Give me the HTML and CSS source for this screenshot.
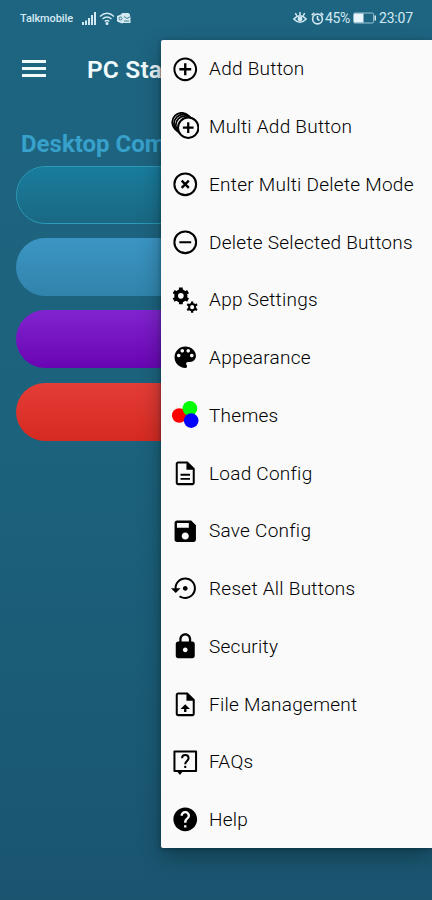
FILE: index.html
```html
<!DOCTYPE html>
<html lang="en">
<head>
<meta charset="utf-8">
<meta name="viewport" content="width=device-width">
<title>PC Status</title>
<link rel="stylesheet" href="styles.css">
</head>
<body>
<div class="screen">
  <header class="status">
    <span class="carrier">Talkmobile</span>
    <svg class="signal" width="14" height="13" viewBox="0 0 14 13" fill="#d3e9f2"><path d="M0 10h2v3H0zM3 8.500h2V13H3zM6 6h2v7H6zM9 3h2v10H9zM12 0h2v13h-2z"/></svg>
    <svg class="wifi" width="16" height="13" viewBox="0 0 16 13" fill="none" stroke="#d3e9f2" stroke-width="1.500"><path d="M1 4.500Q8-2 15 4.500M3.500 7Q8 3 12.500 7M5.700 9.500Q8 7.500 10.300 9.500"/><circle cx="8" cy="11.500" r=".8" fill="#d3e9f2"/></svg>
    <svg class="mail" width="14" height="13" viewBox="0 0 14 13"><path fill="#d3e9f2" d="M5 1h6q2 0 2 3h.5v7H6l-1 .5-5-2V4l4-1.500z"/><circle cx="3.500" cy="6.500" r="1.500" fill="none" stroke="#1e647f" stroke-width=".8"/><path d="M7 4.500l3 2 3.500-2M7 9h5" fill="none" stroke="#1e647f" stroke-width=".8"/></svg>
    <span class="spacer"></span>
    <svg class="eye" width="14" height="12" viewBox="0 0 14 12" fill="none" stroke="#d3e9f2" stroke-width="1.500"><path d="M.8 7Q7 .5 13.200 7Q7 13.500.8 7zM7 0v3M2.300 1.200l1.500 2.500M11.700 1.200l-1.500 2.500"/><circle cx="7" cy="7" r="1.700" fill="#d3e9f2"/></svg>
    <svg class="alarm" width="13" height="13" viewBox="0 0 13 13" fill="none" stroke="#d3e9f2" stroke-width="1.600"><circle cx="6.500" cy="7" r="4.900"/><path d="M6.500 4v3.200l2 1.500M.7 3.200L3.300.9M12.300 3.200L9.700.9"/></svg>
    <span class="level">45%</span>
    <svg class="battery" width="24" height="12" viewBox="0 0 24 12"><rect x=".6" y="1" width="20" height="10" rx="1.500" fill="none" stroke="#9cc4d4" stroke-width="1"/><path d="M1 1.500h9.500v9H1z" fill="#e8f5fa"/><path d="M21.500 3.500h1.500v5h-1.500z" fill="#d3e9f2"/></svg>
    <span class="clock">23:07</span>
  </header>
  <div class="appbar">
    <svg width="24" height="17" viewBox="0 0 24 17" fill="#f1fafd"><path d="M0 0h24v3H0zM0 7h24v3H0zM0 14h24v3H0z"/></svg>
    <h1>PC Status</h1>
  </div>
  <main>
    <h2>Desktop Computer</h2>
    <div class="pill teal"></div>
    <div class="pill blue"></div>
    <div class="pill purple"></div>
    <div class="pill red"></div>
  </main>

  <ul class="menu">
    <li><svg viewBox="0 0 24 24"><path d="M13 7h-2v4H7v2h4v4h2v-4h4v-2h-4V7zm-1-5C6.480 2 2 6.480 2 12s4.480 10 10 10 10-4.480 10-10S17.520 2 12 2zm0 18.300c-4.580 0-8.300-3.720-8.300-8.300s3.720-8.300 8.300-8.300 8.300 3.720 8.300 8.300-3.720 8.300-8.300 8.300z"/></svg><span>Add Button</span></li>
    <li><svg viewBox="0 0 24 24"><g fill="#fafafa" stroke="#000" stroke-width="1.500"><circle cx="9" cy="8.700" r="8"/><circle cx="10.500" cy="10" r="8"/><circle cx="12" cy="11.300" r="8"/><circle cx="14.500" cy="13.200" r="8.600" stroke-width="1.700"/><path d="M14.500 8.700v9M10 13.200h9" stroke-width="1.900"/></g></svg><span>Multi Add Button</span></li>
    <li><svg viewBox="0 0 24 24" class="line"><circle cx="12" cy="12" r="9.150"/><path d="M9 9l6 6M15 9l-6 6" stroke-width="2"/></svg><span>Enter Multi Delete Mode</span></li>
    <li><svg viewBox="0 0 24 24" class="line"><circle cx="12" cy="12" r="9.150"/><path d="M7 12h10" stroke-width="1.700"/></svg><span>Delete Selected Buttons</span></li>
    <li><svg viewBox="0 0 24 24" class="line"><g transform="translate(-.7 -.7)"><circle cx="9" cy="9" r="4" stroke-width="3.200"/><g stroke-width="3.200"><path d="M9 2v2.500M9 13.500V16M2.940 5.500l2.160 1.250M12.900 11.250l2.160 1.250M2.940 12.500l2.160-1.250M12.900 6.750l2.160-1.250"/></g></g><circle cx="17.800" cy="17.800" r="2.550" stroke-width="1.700"/><g stroke-width="1.900"><path d="M17.800 13v2M17.800 20.600v2M13.640 15.400l1.750 1M20.200 19.200l1.750 1M13.640 20.200l1.750-1M20.200 16.400l1.750-1"/></g></svg><span>App Settings</span></li>
    <li><svg viewBox="0 0 24 24"><path d="M12 3c-4.970 0-9 4.030-9 9s4.030 9 9 9c.83 0 1.500-.67 1.500-1.500 0-.39-.15-.74-.39-1.010-.23-.26-.38-.61-.38-.99 0-.83.67-1.500 1.500-1.500H16c2.760 0 5-2.240 5-5 0-4.420-4.030-8-9-8zm-5.500 9c-.83 0-1.500-.67-1.500-1.500S5.670 9 6.500 9 8 9.670 8 10.500 7.330 12 6.500 12zm3-4C8.670 8 8 7.330 8 6.500S8.670 5 9.500 5s1.500.67 1.500 1.500S10.330 8 9.500 8zm5 0c-.83 0-1.500-.67-1.500-1.500S13.670 5 14.500 5s1.500.67 1.500 1.500S15.330 8 14.500 8zm3 4c-.83 0-1.500-.67-1.500-1.500S16.670 9 17.500 9s1.500.67 1.500 1.500-.67 1.500-1.500 1.500z"/></svg><span>Appearance</span></li>
    <li><svg viewBox="0 0 24 24"><circle cx="7" cy="12.200" r="6.200" fill="red"/><circle cx="15.900" cy="6.300" r="6.200" fill="lime"/><circle cx="17" cy="16.500" r="6.200" fill="blue"/></svg><span>Themes</span></li>
    <li><svg viewBox="0 0 24 24"><path d="M8 16h8v1.500H8zm0-3.500h8V14H8zM14 2H6c-1.100 0-2 .9-2 2v16c0 1.100.89 2 1.990 2H18c1.100 0 2-.9 2-2V8l-6-6zm4.300 18.300H5.700V3.700H13V9h5.300v11.300z"/></svg><span>Load Config</span></li>
    <li><svg viewBox="0 0 24 24"><path d="M17 3H5c-1.110 0-2 .9-2 2v14c0 1.100.89 2 2 2h14c1.100 0 2-.9 2-2V7l-4-4zm-5 16c-1.660 0-3-1.340-3-3s1.340-3 3-3 3 1.340 3 3-1.340 3-3 3zm3-10H5V5h10v4z"/></svg><span>Save Config</span></li>
    <li><svg viewBox="0 0 24 24"><path d="M14 12c0-1.100-.9-2-2-2s-2 .9-2 2 .9 2 2 2 2-.9 2-2zm-2-9c-4.970 0-9 4.030-9 9H0l4 4 4-4H4.700c0-4.030 3.270-7.300 7.300-7.300s7.300 3.270 7.300 7.300-3.270 7.300-7.300 7.300c-1.510 0-2.910-.49-4.060-1.300l-1.300 1.400C8.040 20.300 9.940 21 12 21c4.970 0 9-4.030 9-9s-4.030-9-9-9z"/></svg><span>Reset All Buttons</span></li>
    <li><svg viewBox="0 0 24 24"><path d="M18 8h-1V6c0-2.760-2.240-5-5-5S7 3.240 7 6v2H6c-1.100 0-2 .9-2 2v10c0 1.100.9 2 2 2h12c1.100 0 2-.9 2-2V10c0-1.100-.9-2-2-2zm-6 9c-1.100 0-2-.9-2-2s.9-2 2-2 2 .9 2 2-.9 2-2 2zm3.100-9H8.900V6c0-1.710 1.390-3.100 3.100-3.100 1.710 0 3.100 1.390 3.100 3.100v2z"/></svg><span>Security</span></li>
    <li><svg viewBox="0 0 24 24"><path d="M14 2H6c-1.100 0-2 .9-2 2v16c0 1.100.89 2 1.990 2H18c1.100 0 2-.9 2-2V8l-6-6zm4.300 18.300H5.700V3.700H13V9h5.300v11.300zM8 16h3v2.500h2V16h3L12 12z"/></svg><span>File Management</span></li>
    <li><svg viewBox="0 0 24 24" class="line"><path d="M2.900 2.900h18.200v16.400H2.900z" stroke-linejoin="round"/><path d="M5 19.500h5L7.500 22.700z" fill="#000" stroke="none"/><path d="M9.300 8.700c0-3.700 5.500-3.700 5.500 0 0 2.200-2.800 2.200-2.800 4.900M12 15v1.900"/></svg><span>FAQs</span></li>
    <li><svg viewBox="0 0 24 24"><path d="M12 2C6.480 2 2 6.480 2 12s4.480 10 10 10 10-4.480 10-10S17.520 2 12 2zm1 17h-2v-2h2v2zm2.070-7.750l-.9.920C13.450 12.900 13 13.500 13 15h-2v-.5c0-1.100.45-2.100 1.170-2.830l1.240-1.260c.37-.36.590-.86.590-1.410 0-1.100-.9-2-2-2s-2 .9-2 2H8c0-2.210 1.790-4 4-4s4 1.790 4 4c0 .88-.36 1.680-.93 2.250z"/></svg><span>Help</span></li>
  </ul>
</div>
</body>
</html>
```
FILE: styles.css
```css
* { box-sizing: border-box; }
body { margin: 0; font-family: Roboto, "Liberation Sans", sans-serif; }
.screen {
  position: relative;
  height: 900px;
  overflow: hidden;
  background: linear-gradient(#1e6582, #1c627c 50%, #1a5570);
}
.status {
  display: flex;
  align-items: center;
  height: 36px;
  padding: 0 18px 0 20px;
  color: #d3e9f2;
}
.carrier { width: 53px; font-size: 11px; font-weight: 500; letter-spacing: -.1px; white-space: nowrap; }
.signal { margin-left: 9px; }
.wifi { margin-left: 3px; }
.mail { margin-left: 2px; }
.spacer { flex: 1; }
.alarm { margin-left: 4px; }
.level { margin-left: 1px; font-size: 14px; width: 26px; letter-spacing: -.4px; }
.battery { margin-left: 2px; }
.clock { width: 35px; margin-left: 2px; font-size: 14px; letter-spacing: -.2px; }
.level, .clock { font-weight: 400; }
.appbar {
  display: flex;
  align-items: center;
  height: 65px;
  padding-left: 22px;
  gap: 41px;
}
.appbar h1 { margin: 2px 0 0; font-size: 24.500px; font-weight: 600; letter-spacing: .15px; color: #f1fafd; white-space: nowrap; }
main { padding: 29px 16px 0; }
h2 { margin: 0 0 7px 5px; font-size: 24px; line-height: 29px; font-weight: 700; color: #37a0cb; }
.pill { height: 58px; margin-bottom: 14.200px; border-radius: 29px; }
.teal { background: linear-gradient(#197d9d, #1a6883) padding-box; border: 1.500px solid #2b9ab5; }
.blue { background: linear-gradient(#3b95c4, #3184ab); }
.purple { background: linear-gradient(#8124cf, #6a04b3); }
.red { background: linear-gradient(#e43d36, #d52a22); }
.menu {
  position: absolute;
  top: 39.900px;
  left: 161px;
  right: 0;
  margin: 0;
  padding: 0;
  list-style: none;
  background: #fafafa;
  border-radius: 2px 0 0 2px;
  box-shadow: 0 9px 22px rgba(0, 20, 20, .35), 0 1px 4px rgba(0, 20, 40, .4);
}
.menu li { display: flex; align-items: center; height: 57.750px; padding-left: 9.500px; gap: 9.500px; }
.menu svg { width: 28.500px; height: 28.500px; margin-right: .5px; flex: none; }
.line { fill: none; stroke: #000; stroke-width: 1.700; }
.menu span { font-size: 19px; font-weight: 300; letter-spacing: .26px; color: #000; white-space: nowrap; }
```
